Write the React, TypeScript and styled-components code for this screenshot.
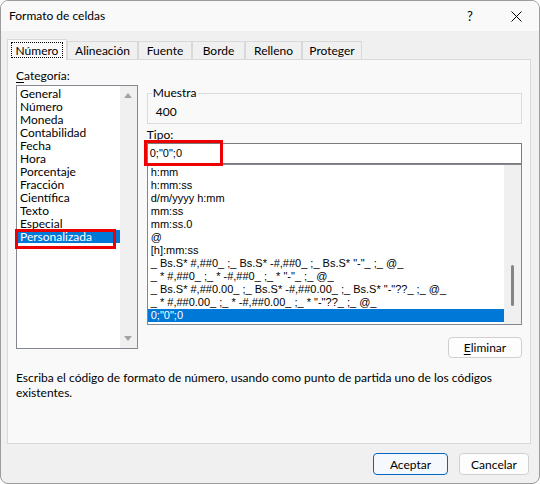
import React from 'react';
import styled, { createGlobalStyle } from 'styled-components';

const GlobalStyle = createGlobalStyle`
  html, body {
    margin: 0;
    padding: 0;
    background: #ffffff;
  }
  body {
    font-family: Lato, "Noto Sans", "Liberation Sans", sans-serif;
    font-size: 12px;
    color: #000000;
  }
  * {
    box-sizing: border-box;
  }
`;

// window frame
const Window = styled.div`
  width: 540px;
  height: 484px;
  border: 1px solid #9c9c9c;
  border-radius: 8px;
  overflow: hidden;
  background: #f0f0f0;
  display: flex;
  flex-direction: column;
`;

const TitleBar = styled.div`
  height: 30px;
  background: #f9f9f9;
  display: flex;
  align-items: center;
  padding-left: 8px;
`;

const Title = styled.div`
  flex: 1;
  line-height: 16px;
`;

const TitleButton = styled.div`
  width: 46px;
  height: 30px;
  display: flex;
  align-items: center;
  justify-content: center;
  font-size: 13px;
`;

const Body = styled.div`
  flex: 1;
  padding: 8px 8px 0 6px;
  display: flex;
  flex-direction: column;
`;

// tabs
const TabRow = styled.div`
  display: flex;
  align-items: flex-end;
  height: 20px;
`;

const Tab = styled.div<{ $w: number; $active?: boolean }>`
  position: relative;
  z-index: ${(p) => (p.$active ? 2 : 1)};
  width: ${(p) => p.$w}px;
  height: ${(p) => (p.$active ? 21 : 18)}px;
  margin-bottom: ${(p) => (p.$active ? -1 : 0)}px;
  background: ${(p) => (p.$active ? '#f9f9f9' : '#f0f0f0')};
  border: 1px solid #d9d9d9;
  border-bottom: none;
  display: flex;
  align-items: center;
  justify-content: center;
  line-height: 15px;
  padding: ${(p) => (p.$active ? '2px 3px 2px' : '0')};
`;

const FocusRect = styled.span`
  flex: 1;
  height: 16px;
  border: 1px dotted #000;
  display: flex;
  align-items: center;
  justify-content: center;
`;

const Panel = styled.div`
  height: 385px;
  border: 1px solid #d9d9d9;
  background: #f9f9f9;
  padding: 8px 8px 0 8px;
  display: flex;
  flex-direction: column;
`;

const TopRow = styled.div`
  display: flex;
  gap: 9px;
`;

const LeftCol = styled.div`
  width: 122px;
  display: flex;
  flex-direction: column;
`;

const RightCol = styled.div`
  width: 376px;
  display: flex;
  flex-direction: column;
  padding-top: 17px;
`;

const Label = styled.div`
  line-height: 16px;
  margin-bottom: 1px;
`;

const Key = styled.span`
  text-decoration: underline;
  text-underline-offset: 2px;
`;

// list boxes
const ListBox = styled.div<{ $h: number }>`
  position: relative;
  height: ${(p) => p.$h}px;
  border: 1px solid #828790;
  background: #ffffff;
  display: flex;
`;

const ListItems = styled.div<{ $mono?: boolean }>`
  flex: 1;
  padding-top: 1px;
  overflow: hidden;
  font-family: ${(p) =>
    p.$mono ? '"Liberation Sans", Arial, sans-serif' : 'inherit'};
  font-size: ${(p) => (p.$mono ? 11 : 12)}px;
`;

const Item = styled.div<{ $sel?: boolean }>`
  height: 13px;
  line-height: 13px;
  padding-left: 3px;
  white-space: nowrap;
  overflow: hidden;
  background: ${(p) => (p.$sel ? '#0078d7' : 'transparent')};
  color: ${(p) => (p.$sel ? '#ffffff' : '#000000')};
`;

const ScrollTrack = styled.div`
  width: 17px;
  background: #f0f0f0;
  display: flex;
  flex-direction: column;
  justify-content: space-between;
  align-items: center;
  padding: 7px 0 7px;
`;

const ThinTrack = styled.div`
  width: 17px;
  background: #f0f0f0;
  display: flex;
  flex-direction: column;
  align-items: center;
  padding-top: 100px;
`;

const Thumb = styled.div`
  width: 3px;
  height: 41px;
  border-radius: 2px;
  background: #858585;
`;

const Arrow = styled.div<{ $down?: boolean }>`
  width: 0;
  height: 0;
  border-left: 4px solid transparent;
  border-right: 4px solid transparent;
  ${(p) =>
    p.$down
      ? 'border-top: 5px solid #a3a3a3;'
      : 'border-bottom: 5px solid #a3a3a3;'}
`;

// red annotation boxes
const Mark = styled.span<{ $l: number; $t: number; $w: number; $h: number }>`
  position: absolute;
  left: ${(p) => p.$l}px;
  top: ${(p) => p.$t}px;
  width: ${(p) => p.$w}px;
  height: ${(p) => p.$h}px;
  border: 3px solid #ee0000;
  pointer-events: none;
  z-index: 3;
`;

// sample group
const Group = styled.fieldset`
  margin: 0;
  height: 39px;
  padding: 0 4px 2px 4px;
  border: 1px solid #dcdcdc;
`;

const Legend = styled.legend`
  padding: 0 1px;
  line-height: 16px;
`;

const Sample = styled.div`
  line-height: 16px;
  padding: 3px 0 0 4px;
`;

const TypeLabel = styled.div`
  line-height: 16px;
  margin-top: 3px;
`;

const Input = styled.div`
  position: relative;
  height: 21px;
  border: 1px solid #7a7a7a;
  background: #ffffff;
  padding-left: 2px;
  line-height: 19px;
  font-family: "Liberation Sans", Arial, sans-serif;
  font-size: 11px;
`;

const Button = styled.div<{ $w: number; $h: number; $primary?: boolean }>`
  width: ${(p) => p.$w}px;
  height: ${(p) => p.$h}px;
  border: 1px solid ${(p) => (p.$primary ? '#0067c0' : '#d0d0d0')};
  border-radius: 4px;
  background: ${(p) => (p.$primary ? '#f5f9fd' : '#fdfdfd')};
  display: flex;
  align-items: center;
  justify-content: center;
`;

const ButtonRow = styled.div`
  display: flex;
  justify-content: flex-end;
  margin-top: 12px;
`;

const Hint = styled.div`
  margin-top: 12px;
  line-height: 15px;
  width: 500px;
`;

const Footer = styled.div`
  display: flex;
  justify-content: flex-end;
  gap: 11px;
  padding: 9px 2px 0 0;
`;

const categories = [
  'General',
  'Número',
  'Moneda',
  'Contabilidad',
  'Fecha',
  'Hora',
  'Porcentaje',
  'Fracción',
  'Científica',
  'Texto',
  'Especial',
  'Personalizada',
];

const formats = [
  'h:mm',
  'h:mm:ss',
  'd/m/yyyy h:mm',
  'mm:ss',
  'mm:ss.0',
  '@',
  '[h]:mm:ss',
  '_ Bs.S* #,##0_ ;_ Bs.S* -#,##0_ ;_ Bs.S* "-"_ ;_ @_',
  '_ * #,##0_ ;_ * -#,##0_ ;_ * "-"_ ;_ @_',
  '_ Bs.S* #,##0.00_ ;_ Bs.S* -#,##0.00_ ;_ Bs.S* "-"??_ ;_ @_',
  '_ * #,##0.00_ ;_ * -#,##0.00_ ;_ * "-"??_ ;_ @_',
  '0;"0";0',
];

const tabs: [string, number][] = [
  ['Número', 60],
  ['Alineación', 71],
  ['Fuente', 54],
  ['Borde', 53],
  ['Relleno', 57],
  ['Proteger', 60],
];

export default function App() {
  return (
    <>
      <GlobalStyle />
      <Window>
        <TitleBar>
          <Title>Formato de celdas</Title>
          <TitleButton>?</TitleButton>
          <TitleButton>
            <svg width="11" height="11" viewBox="0 0 11 11">
              <path d="M0.5 0.5 L10.5 10.5 M10.5 0.5 L0.5 10.5" stroke="#000" strokeWidth="1" />
            </svg>
          </TitleButton>
        </TitleBar>
        <Body>
          <TabRow>
            {tabs.map(([name, w], i) =>
              i === 0 ? (
                <Tab key={name} $w={w} $active>
                  <FocusRect>{name}</FocusRect>
                </Tab>
              ) : (
                <Tab key={name} $w={w}>
                  {name}
                </Tab>
              ),
            )}
          </TabRow>
          <Panel>
            <TopRow>
              <LeftCol>
                <Label>
                  <Key>C</Key>ategoría:
                </Label>
                <ListBox $h={264}>
                  <ListItems>
                    {categories.map((c) => (
                      <Item key={c} $sel={c === 'Personalizada'}>
                        {c}
                      </Item>
                    ))}
                  </ListItems>
                  <ScrollTrack>
                    <Arrow />
                    <Arrow $down />
                  </ScrollTrack>
                  <Mark $l={-2} $t={143} $w={101} $h={20} />
                </ListBox>
              </LeftCol>
              <RightCol>
                <Group>
                  <Legend>Muestra</Legend>
                  <Sample>400</Sample>
                </Group>
                <TypeLabel>Tipo:</TypeLabel>
                <Input>
                  0;"0";0
                  <Mark $l={-4} $t={-4} $w={79} $h={26} />
                </Input>
                <ListBox $h={161}>
                  <ListItems $mono>
                    {formats.map((f, i) => (
                      <Item key={i} $sel={i === formats.length - 1}>
                        {f}
                      </Item>
                    ))}
                  </ListItems>
                  <ThinTrack>
                    <Thumb />
                  </ThinTrack>
                </ListBox>
                <ButtonRow>
                  <Button $w={74} $h={21}>
                    <span>
                      <Key>E</Key>liminar
                    </span>
                  </Button>
                </ButtonRow>
              </RightCol>
            </TopRow>
            <Hint>
              Escriba el código de formato de número, usando como punto de
              partida uno de los códigos existentes.
            </Hint>
          </Panel>
          <Footer>
            <Button $w={75} $h={22} $primary>
              Aceptar
            </Button>
            <Button $w={70} $h={22}>
              Cancelar
            </Button>
          </Footer>
        </Body>
      </Window>
    </>
  );
}
